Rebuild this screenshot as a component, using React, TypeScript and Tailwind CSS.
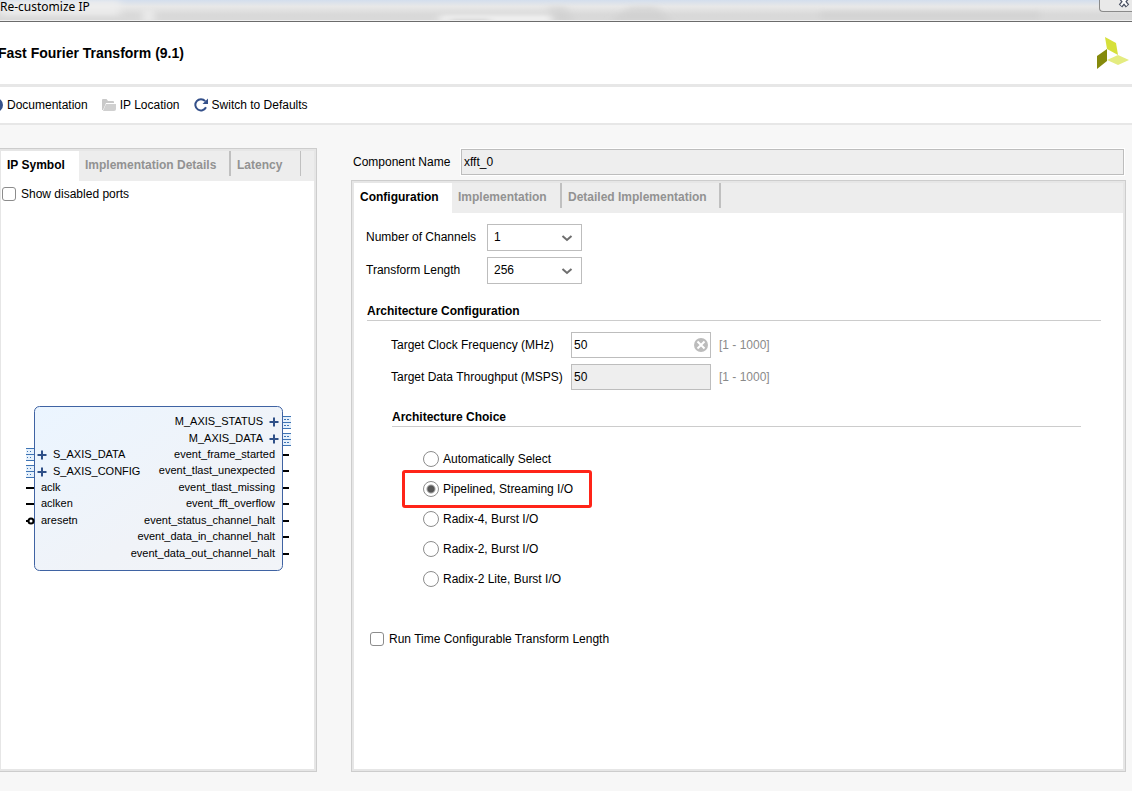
import type { ReactNode } from "react";

type Tab = {
  label: string;
  className: string;
  divider?: string;
};

type Port = {
  name: string;
  y: number;
};

const leftTabs: Tab[] = [
  { label: "IP Symbol", className: "w-[78px]" },
  { label: "Implementation Details", className: "w-[152px]", divider: "border-r-2" },
  { label: "Latency", className: "w-[70px]", divider: "border-r" }
];

const rightTabs: Tab[] = [
  { label: "Configuration", className: "w-[98px]" },
  { label: "Implementation", className: "w-[110px]", divider: "border-r-2" },
  { label: "Detailed Implementation", className: "w-[159px]", divider: "border-r-2" }
];

const architectures = [
  "Automatically Select",
  "Pipelined, Streaming I/O",
  "Radix-4, Burst I/O",
  "Radix-2, Burst I/O",
  "Radix-2 Lite, Burst I/O"
];

const busInputs: Port[] = [
  { name: "S_AXIS_DATA", y: 49 },
  { name: "S_AXIS_CONFIG", y: 66 }
];

const inputs: Port[] = [
  { name: "aclk", y: 82 },
  { name: "aclken", y: 98 }
];

const busOutputs: Port[] = [
  { name: "M_AXIS_STATUS", y: 16 },
  { name: "M_AXIS_DATA", y: 33 }
];

const outputs: Port[] = [
  { name: "event_frame_started", y: 49 },
  { name: "event_tlast_unexpected", y: 65 },
  { name: "event_tlast_missing", y: 82 },
  { name: "event_fft_overflow", y: 98 },
  { name: "event_status_channel_halt", y: 115 },
  { name: "event_data_in_channel_halt", y: 131 },
  { name: "event_data_out_channel_halt", y: 148 }
];

function TabStrip({ tabs }: { tabs: Tab[] }) {
  return (
    <div role="tablist" className="flex h-[30px] bg-[#ededed] font-bold">
      {tabs.map((tab, index) => (
        <button
          key={tab.label}
          type="button"
          role="tab"
          aria-selected={index === 0}
          className={`flex shrink-0 items-start whitespace-nowrap text-left ${tab.className} ${
            index === 0 ? "bg-white text-black" : "text-[#929292]"
          }`}
        >
          <span className={`flex h-[25px] w-full items-center border-[#c0c0c0] pt-0.5 pl-1.5 ${tab.divider ?? ""}`}>
            {tab.label}
          </span>
        </button>
      ))}
    </div>
  );
}

function SelectField({ id, label, value }: { id: string; label: string; value: string }) {
  return (
    <div className="flex items-center">
      <label htmlFor={id} className="w-[121px] pb-0.5 whitespace-nowrap">
        {label}
      </label>
      <div className="relative">
        <select
          id={id}
          defaultValue={value}
          className="block h-[27px] w-[95px] appearance-none border border-[#bdbdbd] bg-white pb-0.5 pl-1.5 outline-none"
        >
          <option>{value}</option>
        </select>
        <svg className="pointer-events-none absolute top-[11px] right-[9px] h-[7px] w-3" viewBox="0 0 12 7">
          <path d="M1.5 1 L6 5 L10.5 1" fill="none" stroke="#6e6e6e" strokeWidth="2" />
        </svg>
      </div>
    </div>
  );
}

function RangeField({ id, label, readOnly = false }: { id: string; label: string; readOnly?: boolean }) {
  return (
    <div className="flex items-center">
      <label htmlFor={id} className="w-[180px] whitespace-nowrap">
        {label}
      </label>
      <div className="relative">
        <input
          id={id}
          type="text"
          defaultValue="50"
          readOnly={readOnly}
          className={`block h-[26px] w-[140px] border border-[#bdbdbd] px-0.5 outline-none ${
            readOnly ? "bg-[#eeeeee]" : "bg-white"
          }`}
        />
        {!readOnly && (
          <button type="button" aria-label="Clear" className="absolute top-1.5 right-[3px]">
            <svg className="block h-3.5 w-3.5" viewBox="0 0 14 14">
              <circle cx="7" cy="7" r="7" fill="#bcbcbc" />
              <path d="M3.5 3.5 L10.5 10.5 M10.5 3.5 L3.5 10.5" stroke="#fff" strokeWidth="2" />
            </svg>
          </button>
        )}
      </div>
      <span className="pl-2 text-[#8a8a8a]">[1 - 1000]</span>
    </div>
  );
}

function CheckField({ label }: { label: string }) {
  return (
    <label className="flex items-center gap-[5px]">
      <input
        type="checkbox"
        className="h-3.5 w-3.5 appearance-none rounded-[3px] border border-[#8c8c8c] bg-white"
      />
      {label}
    </label>
  );
}

function Panel({ className, tabs, children }: { className: string; tabs: Tab[]; children: ReactNode }) {
  return (
    <section className={`flex flex-col border-[#cdcdcd] ${className}`}>
      <div className="flex flex-1 flex-col border-2 border-[#e6e6e6] bg-white">
        <TabStrip tabs={tabs} />
        {children}
      </div>
    </section>
  );
}

function BusPins({ x, y, dash }: { x: number; y: number; dash: string }) {
  return (
    <g stroke="#3f74b4">
      <rect x={x} y={y - 6} width="8" height="12" fill="#e6f1fc" stroke="none" />
      <path d={`M${x} ${y - 5.5}h8 M${x} ${y + 0.5}h8 M${x} ${y + 6.5}h8`} />
      <path d={`M${x + 1} ${y - 2.5}h6 M${x + 1} ${y + 3.5}h6`} strokeDasharray={dash} />
    </g>
  );
}

function Plus({ x, y }: { x: number; y: number }) {
  return <path d={`M${x - 4.5} ${y}h9 M${x} ${y - 4.5}v9`} stroke="#2f5088" strokeWidth="2" />;
}

function IpSymbol() {
  return (
    <svg
      className="block h-[166px] w-[265px] font-['Liberation_Sans',Arial,sans-serif] text-[11px]"
      viewBox="0 0 265 166"
      role="img"
      aria-label="Fast Fourier Transform symbol"
    >
      <defs>
        <linearGradient id="block" x1="0" y1="0" x2="1" y2="1">
          <stop offset="0" stopColor="#ebf5ff" />
          <stop offset="0.6" stopColor="#f0f3f8" />
          <stop offset="1" stopColor="#f2f4f8" />
        </linearGradient>
      </defs>
      <rect x="8.5" y="0.5" width="248" height="164" rx="5" fill="url(#block)" stroke="#3f63a3" />
      {busInputs.map((port) => (
        <g key={port.name}>
          <BusPins x={0} y={port.y - 1} dash="1 2" />
          <Plus x={16} y={port.y} />
          <text x="27" y={port.y + 3}>
            {port.name}
          </text>
        </g>
      ))}
      {inputs.map((port) => (
        <g key={port.name}>
          <path d={`M0 ${port.y}h8`} stroke="#000" strokeWidth="2" />
          <text x="15" y={port.y + 3}>
            {port.name}
          </text>
        </g>
      ))}
      <path d="M0 115h3" stroke="#000" strokeWidth="2" />
      <circle cx="5" cy="115" r="2.5" fill="#fff" stroke="#000" strokeWidth="2" />
      <text x="15" y="118">
        aresetn
      </text>
      {busOutputs.map((port) => (
        <g key={port.name}>
          <BusPins x={257} y={port.y} dash="2 1" />
          <Plus x={248} y={port.y} />
          <text x="237" y={port.y + 3} textAnchor="end">
            {port.name}
          </text>
        </g>
      ))}
      {outputs.map((port) => (
        <g key={port.name}>
          <path d={`M257 ${port.y}h6`} stroke="#000" strokeWidth="2" />
          <text x="249" y={port.y + 3} textAnchor="end">
            {port.name}
          </text>
        </g>
      ))}
    </svg>
  );
}

// Frosted glass look of the window frame
function TitleGlass() {
  return (
    <svg className="absolute inset-0 h-full w-full" viewBox="0 0 1132 21" preserveAspectRatio="none">
      <defs>
        <filter id="frost" x="-20%" y="-50%" width="140%" height="200%">
          <feGaussianBlur stdDeviation="4 2" />
        </filter>
      </defs>
      <g filter="url(#frost)">
        <rect x="0" y="0" width="120" height="16" fill="#f0f0f0" opacity="0.7" />
        <rect x="144" y="10" width="9" height="12" fill="#efefef" />
        <rect x="440" y="15" width="112" height="8" fill="#f0f0f0" />
        <rect x="450" y="20" width="40" height="3" fill="#9a9a9a" opacity="0.6" />
        <path d="M548 6 H566 L574 22 H552 Z" fill="#c8c8c8" opacity="0.4" />
        <path d="M630 6 H656 L672 22 H610 Z" fill="#c8c8c8" opacity="0.4" />
        <rect x="820" y="11" width="220" height="9" fill="#cfcfcf" opacity="0.5" />
      </g>
      <rect x="0" y="20" width="1132" height="1" fill="#f0f0f0" />
    </svg>
  );
}

function TitleBar() {
  return (
    <div className="relative flex h-[22px] items-start justify-between border-b border-[#6b6b6b] bg-linear-to-b from-[#d3deed] via-[#e8e8e8] via-30% to-[#d9d9d9] to-70%">
      <TitleGlass />
      <span className="relative font-['Noto_Sans','Open_Sans',sans-serif] text-xs leading-[14px]">
        Re-customize IP
      </span>
      <button
        type="button"
        aria-label="Close"
        className="relative flex h-3 w-[33px] items-start justify-center rounded-bl-[4px] border-b border-l border-[#8a8a8a] bg-[#e9e9e9] pl-4"
      >
        <svg className="h-2 w-3" viewBox="0 0 12 8">
          <path d="M3 -2 L9.5 6 M9 -2 L2.5 6" stroke="#4b5264" strokeWidth="4.5" />
          <path d="M3 -2 L9 5.4 M9 -2 L3 5.4" stroke="#fff" strokeWidth="2" />
        </svg>
      </button>
    </div>
  );
}

export default function App() {
  return (
    <div className="flex min-h-screen flex-col overflow-x-hidden bg-[#f7f7f7] font-['Liberation_Sans',Arial,sans-serif] text-xs text-black">
      <TitleBar />

      <header className="flex h-[65px] items-center justify-between border-b-[3px] border-[#e7e7e7] bg-white pr-[3px]">
        <h1 className="-ml-0.5 text-sm font-bold whitespace-nowrap">Fast Fourier Transform (9.1)</h1>
        <svg className="h-8 w-8" viewBox="0 0 32 32">
          <path d="M8 0 L19 6 L21 18 L10 12 Z" fill="#d6e03a" />
          <path d="M0 19 L10 12 V24 L0 32 Z" fill="#858a0c" />
          <path d="M10 23 L21 18 L32 23 L21 28 Z" fill="#e4ec80" />
        </svg>
      </header>

      <nav className="flex h-[38px] items-center gap-3.5 border-b-2 border-[#e7e7e7] bg-white">
        <button type="button" className="flex items-center gap-1">
          <svg className="h-3.5 w-[3px]" viewBox="0 0 3 14">
            <circle cx="-4" cy="7" r="7" fill="#34508a" />
          </svg>
          Documentation
        </button>
        <button type="button" className="flex items-center gap-1">
          <svg className="h-3 w-3.5" viewBox="0 0 14 12">
            <path d="M0 1 Q0 0 1 0 H4.5 L6 2 H11 Q12 2 12 3 V4 H4 L1 11 H0 Z" fill="#c9c9c9" />
            <path d="M4 5 H14 V10 Q14 12 12 12 H1 Z" fill="#d0d0d0" />
          </svg>
          IP Location
        </button>
        <button type="button" className="flex items-center gap-1">
          <svg className="h-3.5 w-3.5" viewBox="0 0 14 14">
            <path d="M11.2 3.2 A5.6 5.6 0 1 0 12 9.3" fill="none" stroke="#34508a" strokeWidth="2" />
            <path d="M14 0.5 V6 H8.5 Z" fill="#34508a" />
          </svg>
          Switch to Defaults
        </button>
      </nav>

      <main className="flex flex-1 gap-[34px] pt-[23px] pr-1.5 pb-[19px]">
        <Panel tabs={leftTabs} className="-ml-px w-[318px] shrink-0 border-y border-r">
          <div className="pt-[5px] pl-px">
            <CheckField label="Show disabled ports" />
          </div>
          <div className="flex flex-1 items-center pt-1.5 pl-[25px]">
            <IpSymbol />
          </div>
        </Panel>

        <div className="flex min-w-0 flex-1 flex-col gap-[5px]">
          <div className="flex items-center pt-px pr-0.5 pl-0.5">
            <label htmlFor="component-name" className="w-[108px] whitespace-nowrap">
              Component Name
            </label>
            <input
              id="component-name"
              type="text"
              defaultValue="xfft_0"
              readOnly
              className="h-[26px] min-w-0 flex-1 border border-[#bdbdbd] bg-[#eeeeee] px-0.5 outline-1 outline-white"
            />
          </div>

          <Panel tabs={rightTabs} className="flex-1 border">
            <div className="pt-[11px] pr-[22px] pl-3">
              <div className="flex flex-col gap-1.5">
                <SelectField id="channels" label="Number of Channels" value="1" />
                <SelectField id="length" label="Transform Length" value="256" />
              </div>

              <h2 className="mt-[19px] ml-px border-b border-[#cccccc] pb-px leading-4 font-bold">
                Architecture Configuration
              </h2>
              <div className="flex flex-col gap-1.5 pt-[11px] pl-[25px]">
                <RangeField id="clock" label="Target Clock Frequency (MHz)" />
                <RangeField id="throughput" label="Target Data Throughput (MSPS)" readOnly />
              </div>

              <h3 className="mt-[19px] mr-5 ml-[26px] border-b border-[#cccccc] pb-px leading-4 font-bold">
                Architecture Choice
              </h3>
              <div className="flex flex-col items-start pt-[17px] pl-9">
                {architectures.map((name) => {
                  const selected = name === "Pipelined, Streaming I/O";
                  return (
                    <label
                      key={name}
                      className={`flex items-center gap-1 ${
                        selected ? "-my-1 h-[38px] rounded-[3px] border-3 border-[#ff2418] pr-4 pl-[18px]" : "h-[30px] pl-[21px]"
                      }`}
                    >
                      <input
                        type="radio"
                        name="architecture"
                        defaultChecked={selected}
                        className="h-4 w-4 appearance-none rounded-full border border-[#8c8c8c] bg-white checked:bg-radial checked:from-[#555555] checked:from-[3px] checked:to-white checked:to-[5px]"
                      />
                      {name}
                    </label>
                  );
                })}
              </div>

              <div className="pt-[37px] pl-1">
                <CheckField label="Run Time Configurable Transform Length" />
              </div>
            </div>
          </Panel>
        </div>
      </main>
    </div>
  );
}
